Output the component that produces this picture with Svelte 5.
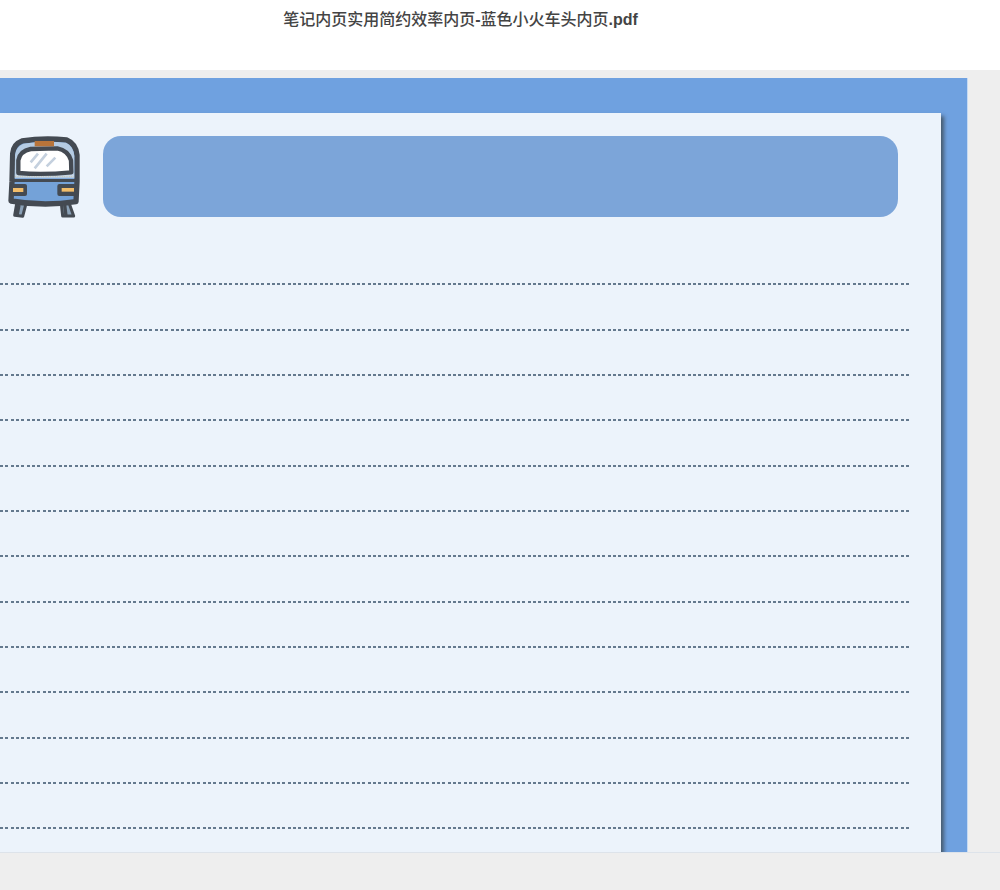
<script>
	const lines = Array.from({ length: 14 }, (_, i) => i)
</script>

<div class="viewer">
	<header class="title-bar">
		<h1><span class="cjk">笔记内页实用简约效率内页</span>-<span class="cjk">蓝色小火车头内页</span>.pdf</h1>
	</header>

	<main class="stage">
		<div class="page">
			<div class="paper">
				<div class="top-row">
					<svg class="train" viewBox="0 0 300 300" aria-hidden="true">
						<!-- legs -->
						<path d="M50 236 L44 271 L68 274 L78 236 Z" fill="#8aa0b6" stroke="#444a52" stroke-width="9" stroke-linejoin="round" />
						<path d="M184 236 L188 273 L221 273 L208 236 Z" fill="#8aa0b6" stroke="#444a52" stroke-width="9" stroke-linejoin="round" />
						<path d="M57 240 L51 272 M194 240 L198 273" stroke="#444a52" stroke-width="10" fill="none" />
						<!-- body -->
						<path d="M36 170 L38 86 Q40 58 66 48 Q130 38 200 45 Q227 56 231 90 L231 170 L228 230 Q130 245 33 228 Z" fill="#74a2d8" stroke="#444a52" stroke-width="16" stroke-linejoin="round" />
						<path d="M44 160 L45 90 Q47 66 70 56 Q130 47 198 53 Q221 64 223 94 L223 160 Z" fill="#b5cbe2" />
						<path d="M46 152 H222" stroke="#c9d8e6" stroke-width="7" />
						<path d="M46 155 H222" stroke="#e0b872" stroke-width="2" stroke-dasharray="2 5" />
						<rect x="38" y="162" width="190" height="9" fill="#444a52" />
						<!-- window -->
						<path d="M55 144 L55 106 Q60 78 92 72 L172 70 Q204 76 213 106 L214 142 Q130 150 55 144 Z" fill="#fff" stroke="#444a52" stroke-width="13" stroke-linejoin="round" />
						<path d="M92 112 L114 86 M104 130 L140 86 M140 124 L166 98" stroke="#c4d0de" stroke-width="8" fill="none" />
						<!-- sign -->
						<rect x="104" y="48" width="58" height="16" fill="#b8743a" />
						<!-- lights -->
						<rect x="30" y="177" width="51" height="36" rx="6" fill="#444a52" />
						<rect x="39" y="189" width="31" height="12" fill="#f2bd6a" />
						<rect x="172" y="177" width="56" height="36" rx="6" fill="#444a52" />
						<rect x="185" y="189" width="37" height="11" fill="#f2bd6a" />
					</svg>
					<div class="banner"></div>
				</div>

				<div class="lines">
					{#each lines as n (n)}
						<div class="line"></div>
					{/each}
				</div>
			</div>
		</div>
	</main>
</div>

<style>
	:global(body) {
		background: #eeeeee;
	}

	.viewer {
		height: 890px;
		overflow: hidden;
		background: #eeeeee;
	}

	.title-bar {
		height: 70px;
		background: #fff;
		padding-right: 79px;
		box-sizing: border-box;
	}

	h1 {
		margin: 0;
		padding-top: 11px;
		font-family: "Liberation Sans", "Noto Sans CJK SC", sans-serif;
		font-size: 16px;
		line-height: 18px;
		font-weight: 700;
		color: #444;
		text-align: center;
	}

	.cjk {
		font-weight: 500;
	}

	.stage {
		height: 783px;
		padding-top: 8px;
		box-sizing: border-box;
		overflow: hidden;
		border-bottom: 1px solid #dde3ea;
	}

	.page {
		width: 967px;
		height: 800px;
		padding-top: 35px;
		background: #6fa1e0;
		border-right: 1px solid #c5daf3;
	}

	.paper {
		width: 941px;
		height: 800px;
		padding-top: 12px;
		box-sizing: border-box;
		background: #ecf3fb;
		box-shadow: 3px 3px 4px #46596c;
	}

	.top-row {
		display: flex;
		align-items: flex-start;
		gap: 3px;
		height: 100px;
	}

	.train {
		flex: none;
		width: 100px;
		height: 100px;
	}

	.banner {
		flex: none;
		width: 795px;
		height: 81px;
		margin-top: 11px;
		border-radius: 18px;
		background: #7ca5d9;
	}

	.lines {
		margin-top: 58.33px;
		width: 909px;
	}

	.line {
		height: 2px;
		margin-bottom: 43.33px;
		background: repeating-linear-gradient(90deg, #64798e 0 3px, transparent 3px 5.33px);
	}
</style>
